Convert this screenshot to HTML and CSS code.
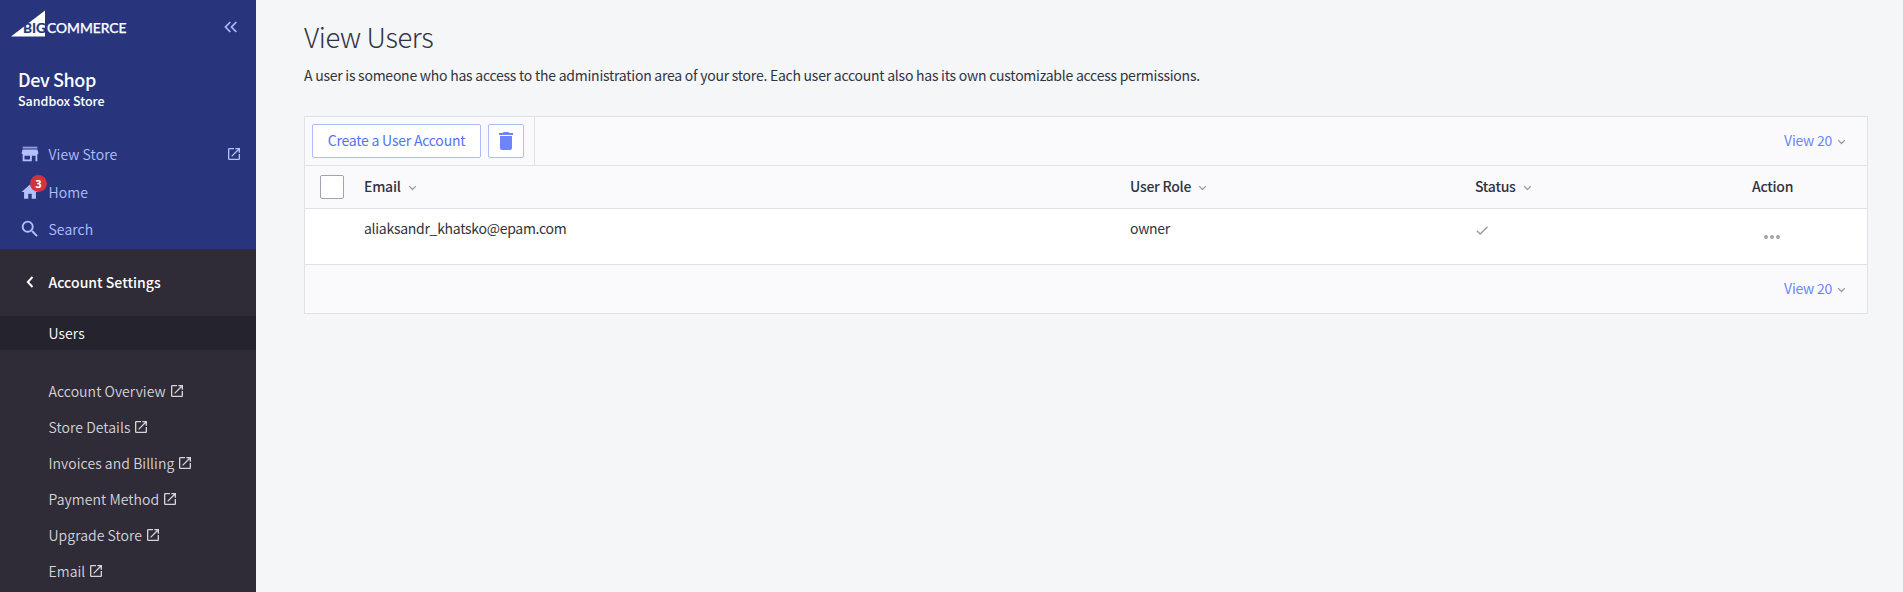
FILE: index.html
```html
<!DOCTYPE html>
<html lang="en">
<head>
<meta charset="utf-8">
<title>View Users</title>
<link rel="stylesheet" href="styles.css">
</head>
<body>
<svg class="defs" width="0" height="0">
  <symbol id="external" viewBox="0 0 24 24"><path fill="currentColor" d="M19 19H5V5h7V3H5a2 2 0 0 0-2 2v14a2 2 0 0 0 2 2h14c1.100 0 2-.9 2-2v-7h-2v7zM14 3v2h3.590l-9.830 9.830 1.410 1.410L19 6.410V10h2V3h-7z"/></symbol>
  <symbol id="chevron" viewBox="0 0 10 6"><path fill="none" stroke="currentColor" stroke-width="1.500" d="M1.300 .9 5 4.600 8.700 .9"/></symbol>
</svg>
<div class="app">
  <aside class="sidebar">
    <div class="brand-area">
      <div class="brand">
        <svg class="logo" width="118" height="28" viewBox="0 0 118 28">
          <path d="M0 26.500 34 0.500V26.500z" fill="#fff"/>
          <text class="logo-big" x="12" y="22.800" textLength="23" lengthAdjust="spacingAndGlyphs">BIG</text>
          <text class="logo-text" x="36" y="22.800" textLength="79.500" lengthAdjust="spacingAndGlyphs">COMMERCE</text>
        </svg>
        <svg class="collapse" width="14" height="12" viewBox="0 0 14 12"><path fill="none" stroke="currentColor" stroke-width="1.800" d="M6.300 1 1.500 6l4.800 5M12.300 1 7.500 6l4.800 5"/></svg>
      </div>
      <div class="store-name">Dev Shop</div>
      <div class="store-type">Sandbox Store</div>
      <nav class="primary">
        <a class="nav-item">
          <svg class="nav-icon" viewBox="0 0 24 24"><path opacity=".75" d="M20 4H4v2h16V4z"/><path d="M21 12v-2l-1-3H4l-1 3v2h1v8h10v-6h4v6h2v-8h1zm-9 6H6v-4h6v4z"/></svg>
          <span>View Store</span>
          <svg class="ext ext-end"><use href="#external"/></svg>
        </a>
        <a class="nav-item">
          <svg class="nav-icon" viewBox="-1 -1 26 26"><path d="M10 20v-6h4v6h5v-8h3L12 3 2 12h3v8z"/></svg>
          <span>Home</span>
          <b class="badge">3</b>
        </a>
        <a class="nav-item">
          <svg class="nav-icon" viewBox="0 0 24 24"><path d="M15.500 14h-.79l-.28-.27A6.470 6.470 0 0 0 16 9.500 6.500 6.500 0 1 0 9.500 16c1.610 0 3.090-.59 4.230-1.570l.27.28v.79l5 4.990L20.490 19l-4.990-5zm-6 0a4.500 4.500 0 1 1 0-9 4.500 4.500 0 0 1 0 9z"/></svg>
          <span>Search</span>
        </a>
      </nav>
    </div>
    <div class="section-title">
      <svg width="8" height="12" viewBox="0 0 8 12"><path fill="none" stroke="currentColor" stroke-width="1.900" d="M6.500 1 1.800 6l4.700 5"/></svg>
      <span>Account Settings</span>
    </div>
    <a class="sub-item active">Users</a>
    <nav class="secondary">
      <a class="sub-item">Account Overview<svg class="ext"><use href="#external"/></svg></a>
      <a class="sub-item">Store Details<svg class="ext"><use href="#external"/></svg></a>
      <a class="sub-item">Invoices and Billing<svg class="ext"><use href="#external"/></svg></a>
      <a class="sub-item">Payment Method<svg class="ext"><use href="#external"/></svg></a>
      <a class="sub-item">Upgrade Store<svg class="ext"><use href="#external"/></svg></a>
      <a class="sub-item">Email<svg class="ext"><use href="#external"/></svg></a>
    </nav>
  </aside>
  <main class="content">
    <h1>View Users</h1>
    <p class="intro">A user is someone who has access to the administration area of your store. Each user account also has its own customizable access permissions.</p>
    <section class="panel">
      <div class="toolbar">
        <div class="actions">
          <button class="btn create">Create a User Account</button>
          <button class="btn trash"><svg width="14" height="18" viewBox="0 0 14 18"><path fill="currentColor" d="M1 16a2 2 0 0 0 2 2h8a2 2 0 0 0 2-2V4H1zM14 1h-3.500l-1-1h-5l-1 1H0v2h14z"/></svg></button>
        </div>
        <a class="pager">View 20<svg class="chev"><use href="#chevron"/></svg></a>
      </div>
      <div class="row head">
        <div><span class="checkbox"></span></div>
        <div class="label">Email<svg class="chev"><use href="#chevron"/></svg></div>
        <div class="label">User Role<svg class="chev"><use href="#chevron"/></svg></div>
        <div class="label">Status<svg class="chev"><use href="#chevron"/></svg></div>
        <div class="label">Action</div>
      </div>
      <div class="row data">
        <div></div>
        <div>aliaksandr_khatsko@epam.com</div>
        <div>owner</div>
        <div><svg class="check" width="13" height="9" viewBox="0 0 13 9"><path fill="none" stroke="#9c9ba3" stroke-width="1.400" d="M1 4.800 4.200 8 11.500 .8"/></svg></div>
        <div><svg class="dots" width="16" height="4" viewBox="0 0 16 4" fill="#a3a3ab"><circle cx="2" cy="2" r="2"/><circle cx="8" cy="2" r="2"/><circle cx="14" cy="2" r="2"/></svg></div>
      </div>
      <div class="toolbar foot">
        <a class="pager">View 20<svg class="chev"><use href="#chevron"/></svg></a>
      </div>
    </section>
  </main>
</div>
</body>
</html>
```
FILE: styles.css
```css
* { box-sizing: border-box; }
body {
  margin: 0;
  background: #f5f6f8;
  color: #313440;
  font: 14px/20px "Noto Sans CJK SC", "Noto Sans", sans-serif;
  letter-spacing: -.25px;
}
.defs { position: absolute; }
.app { display: flex; height: 592px; overflow: hidden; }
.sidebar { width: 256px; flex: none; background: #2f2b37; color: #fff; }
.brand-area { height: 249px; background: #28357d; }
.brand { display: flex; align-items: flex-start; justify-content: space-between; padding: 10px 18px 0 11px; height: 68px; }
.logo { font-family: Lato, sans-serif; font-size: 13.400px; letter-spacing: 0; }
.logo-big { fill: #28357d; font-weight: 700; stroke: #28357d; stroke-width: .2px; }
.logo-text { fill: #fff; font-weight: 500; stroke: #fff; stroke-width: .25px; }
.collapse { margin-top: 11px; color: #a8b8fb; }
.store-name { height: 22px; padding-left: 18px; font-size: 18px; line-height: 23px; font-weight: 500; letter-spacing: -.4px; }
.store-type { height: 22px; padding-left: 18px; font-size: 12.500px; line-height: 22px; font-weight: 500; letter-spacing: -.02px; }
.primary { padding-top: 23px; }
.nav-item { position: relative; display: flex; align-items: center; height: 38px; padding: 0 14px 0 19px; color: #b3c0fb; font-weight: 350; letter-spacing: .08px; }
.nav-item:last-child { height: 36px; }
.nav-icon { width: 22px; height: 22px; margin-right: 7.500px; fill: currentColor; }
.badge { position: absolute; left: 30px; top: 2px; width: 17px; height: 17px; border-radius: 50%; background: #d0343f; color: #fff; font-size: 11px; font-weight: 700; line-height: 17px; text-align: center; letter-spacing: 0; }
.ext { width: 16px; height: 16px; margin-left: 3px; }
.ext-end { margin-left: auto; }
.section-title { display: flex; align-items: center; height: 67px; padding: 0 0 1px 26px; font-weight: 500; letter-spacing: .02px; }
.section-title span { margin-left: 14.500px; }
.sub-item { display: flex; align-items: center; height: 36px; padding-left: 48.500px; color: #d5d4da; font-weight: 350; letter-spacing: .06px; }
.active { height: 34px; background: #25232d; color: #fff; }
.secondary { padding-top: 23px; }
.content { flex: 1; padding: 17px 35px 0 48px; }
h1 { margin: 0; font-size: 27.500px; line-height: 38px; font-weight: 300; letter-spacing: -.4px; }
.intro { margin: 10px 0 31px; line-height: 20px; letter-spacing: -.245px; }
.panel { border: 1px solid #dfe1eb; background: #fafafc; }
.toolbar { display: flex; justify-content: space-between; height: 48px; }
.actions { display: flex; align-items: center; gap: 7px; padding: 0 10px 0 7px; border-right: 1px solid #dfe1eb; }
.btn { display: flex; align-items: center; justify-content: center; height: 34px; padding: 0; border: 1px solid #aebcfa; border-radius: 2px; background: #fff; color: #5472f5; font: inherit; letter-spacing: -.22px; }
.create { width: 169px; padding-bottom: 2px; }
.trash { width: 36px; color: #6c85fa; }
.pager { display: flex; align-items: center; margin-left: auto; padding: 0 21px 2px 0; color: #6c85fa; }
.chev { width: 9px; height: 6px; margin: 3px 0 0 7px; color: #9c9ba3; }
.pager .chev { margin-left: 5px; }
.row { display: grid; grid-template-columns: 59px 766px 345px 277px 1fr; border-top: 1px solid #dfe1eb; }
.row > div { display: flex; align-items: center; }
.head { height: 43px; font-weight: 500; }
.row > .label { padding-bottom: 2px; }
.checkbox { width: 24px; height: 24px; margin-left: 15px; border: 1px solid #a0a3b1; border-radius: 2px; background: #fff; }
.data { height: 56px; padding-top: 9px; background: #fff; letter-spacing: -.28px; }
.data > div { height: 20px; }
.check { margin: 4px 0 0 1px; }
.dots { margin: 17px 0 0 12px; }
.foot { height: 49px; border-top: 1px solid #dfe1eb; }
```
